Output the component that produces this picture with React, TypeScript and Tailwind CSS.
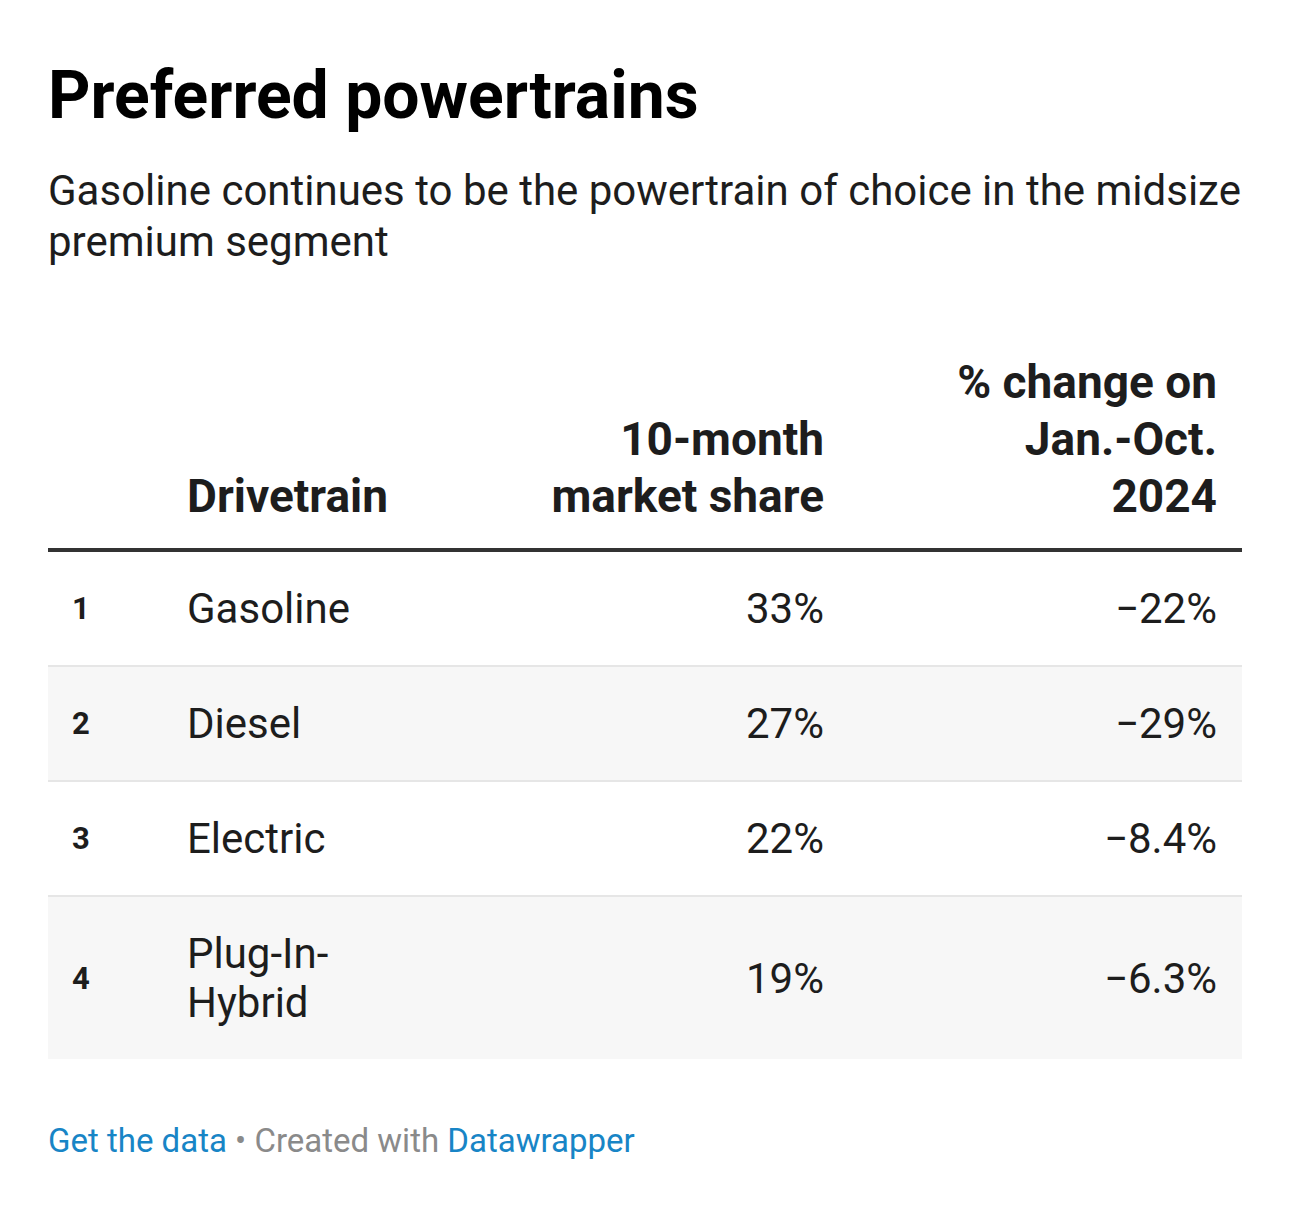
import React from 'react'

const rows = [
  { rank: 1, name: 'Gasoline', share: '33%', change: '−22%' },
  { rank: 2, name: 'Diesel', share: '27%', change: '−29%' },
  { rank: 3, name: 'Electric', share: '22%', change: '−8.4%' },
  { rank: 4, name: 'Plug-In-Hybrid', share: '19%', change: '−6.3%' },
]

export default function App() {
  return (
    <div className="bg-white w-[1290px] h-[1214px] px-[48px] pt-[60px] text-[#1d1d1d]" style={{ fontFamily: 'Roboto, "Liberation Sans", sans-serif' }}>
      <h1 className="text-[66px] leading-[72px] font-bold text-black">Preferred powertrains</h1>
      <p className="mt-[33px] text-[42px] leading-[51px] text-[#1d1d1d]">
        Gasoline continues to be the powertrain of choice in the midsize premium segment
      </p>

      <div className="mt-[87px]">
        {/* header */}
        <div className="flex items-end border-b-[4px] border-[#333] pb-[23px] text-[46px] leading-[57px] font-bold">
          <div className="w-[139px]" />
          <div className="w-[300px]">Drivetrain</div>
          <div className="w-[337px] text-right">10-month<br />market share</div>
          <div className="w-[393px] text-right">% change on<br />Jan.-Oct.<br />2024</div>
        </div>

        {rows.map((r, i) => (
          <div
            key={r.rank}
            className={`flex items-center py-[32px] text-[42px] leading-[49px] ${i % 2 === 1 ? 'bg-[#f7f7f7]' : 'bg-white'} ${i < rows.length - 1 ? 'border-b-2 border-[#e6e6e6]' : ''}`}
          >
            <div className="w-[139px] pl-[24px] text-[31px] font-bold">{r.rank}</div>
            <div className="w-[300px]">
              {r.name === 'Plug-In-Hybrid' ? (
                <>Plug-In-<br />Hybrid</>
              ) : (
                r.name
              )}
            </div>
            <div className="w-[337px] text-right">{r.share}</div>
            <div className="w-[393px] text-right">{r.change}</div>
          </div>
        ))}
      </div>

      <div className="mt-[62px] text-[33px] leading-[40px]">
        <span className="text-[#1885c6]">Get the data</span>
        <span className="text-[#8a8a8a]"> • Created with </span>
        <span className="text-[#1885c6]">Datawrapper</span>
      </div>
    </div>
  )
}
